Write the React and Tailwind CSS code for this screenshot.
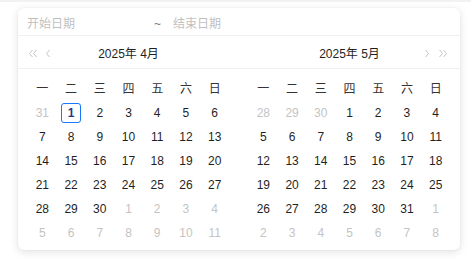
import React from 'react';

const WEEK = ['一', '二', '三', '四', '五', '六', '日'];

// 生成一个月的 42 格（周一开头）
function buildDays(prevLast, lead, total) {
  const cells = [];
  for (let i = lead - 1; i >= 0; i--) cells.push({ d: prevLast - i, out: true });
  for (let d = 1; d <= total; d++) cells.push({ d, out: false });
  let n = 1;
  while (cells.length < 42) cells.push({ d: n++, out: true });
  return cells;
}

const Chevron = ({ double = false, dir = 'left' }) => (
  <svg width={double ? 10 : 6} height="9" viewBox={double ? '0 0 10 9' : '0 0 6 9'} fill="none">
    <g stroke="#c4c4c4" strokeWidth="1" transform={dir === 'right' ? `translate(${double ? 10 : 6} 0) scale(-1 1)` : undefined}>
      <path d="M4.5 1 L1.5 4.5 L4.5 8" />
      {double && <path d="M8.5 1 L5.5 4.5 L8.5 8" />}
    </g>
  </svg>
);

const MonthPanel = ({ title, days, side, today }) => (
  <div className="w-[221px]">
    <div className="h-[33px] border-b border-[#f0f0f0] grid grid-cols-[48px_1fr_48px] items-center">
      <div className="flex items-center gap-[7px] pl-[10px] pt-[2px]">
        {side === 'left' && (
          <>
            <Chevron double />
            <Chevron />
          </>
        )}
      </div>
      <div className="text-center text-[12px] text-[#1f1f1f] pt-[3px]">{title}</div>
      <div className="flex items-center justify-end gap-[8px] pr-[12px] pt-[2px]">
        {side === 'right' && (
          <>
            <Chevron dir="right" />
            <Chevron double dir="right" />
          </>
        )}
      </div>
    </div>
    <div className="px-[10px] pt-[8px] pb-[4px]">
      <div className="grid grid-cols-7">
        {WEEK.map((w) => (
          <div key={w} className="h-[24px] flex items-center justify-center text-[12px] text-[#333]">
            {w}
          </div>
        ))}
        {days.map((c, i) => (
          <div key={i} className="h-[24px] flex items-center justify-center text-[12px]">
            {today && !c.out && c.d === today ? (
              <span className="w-[20px] h-[20px] flex items-center justify-center border border-[#1677ff] rounded-[3px] font-semibold text-[#1d3a8a]">
                {c.d}
              </span>
            ) : (
              <span className={c.out ? 'text-[#c4c4c4]' : 'text-[#1f1f1f]'}>{c.d}</span>
            )}
          </div>
        ))}
      </div>
    </div>
  </div>
);

export default function App() {
  const april = buildDays(31, 1, 30);
  const may = buildDays(30, 3, 31);

  return (
    <div
      className="w-[471px] h-[260px] bg-white border-t-2 border-[#f2f2f2] overflow-hidden"
      style={{ fontFamily: '"Liberation Sans", "Noto Sans CJK SC", sans-serif' }}
    >
      <div className="ml-[18px] mt-[6px] w-[442px] h-[242px] bg-white rounded-[6px] shadow-[0_2px_8px_rgba(0,0,0,0.12),0_0_2px_rgba(0,0,0,0.06)] flex flex-col">
        <div className="h-[28px] border-b border-[#f0f0f0] flex items-center text-[12px] text-[#bfbfbf] pt-[4px]">
          <span className="pl-[9px] w-[136px]">开始日期</span>
          <span className="w-[19px] text-[#777]">~</span>
          <span>结束日期</span>
        </div>
        <div className="flex">
          <MonthPanel title="2025年 4月" days={april} side="left" today={1} />
          <MonthPanel title="2025年 5月" days={may} side="right" />
        </div>
      </div>
    </div>
  );
}
